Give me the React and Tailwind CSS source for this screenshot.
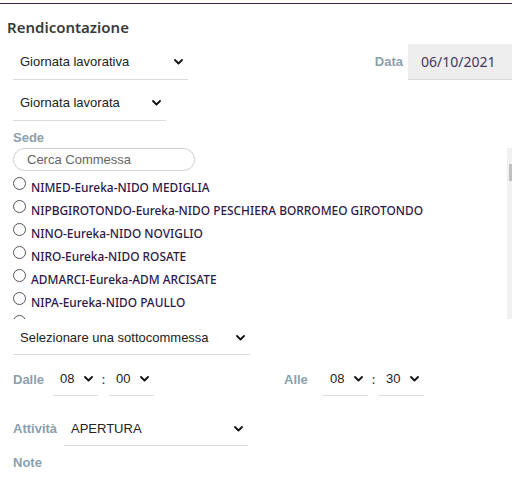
import React from 'react';

const Chevron = ({ className = '' }) => (
  <svg width="9" height="6" viewBox="0 0 9 6" className={className}>
    <path d="M1 1l3.5 3.5L8 1" fill="none" stroke="#111" strokeWidth="1.8" strokeLinecap="round" strokeLinejoin="round" />
  </svg>
);

const Select = ({ value, className = '', text = 'pl-[7px]' }) => (
  <div className={`flex items-center justify-between border-b border-[#dcdcdc] pr-[5px] text-[13px] text-[#222] font-['Liberation_Sans',Arial,sans-serif] ${text} ${className}`}>
    <span>{value}</span>
    <Chevron />
  </div>
);

const Label = ({ children, className = '' }) => (
  <span className={`text-[13px] font-bold text-[#8d9fac] font-['Liberation_Sans',Arial,sans-serif] ${className}`}>{children}</span>
);

const sedi = [
  'NIMED-Eureka-NIDO MEDIGLIA',
  'NIPBGIROTONDO-Eureka-NIDO PESCHIERA BORROMEO GIROTONDO',
  'NINO-Eureka-NIDO NOVIGLIO',
  'NIRO-Eureka-NIDO ROSATE',
  'ADMARCI-Eureka-ADM ARCISATE',
  'NIPA-Eureka-NIDO PAULLO',
];

const Radio = () => (
  <span className="block w-[13px] h-[13px] rounded-full border border-[#555] bg-white shrink-0" />
);

export default function App() {
  return (
    <div className="w-[512px] h-[498px] bg-white overflow-hidden font-['Noto_Sans',sans-serif]">
      <div className="h-[3px]" />
      <div className="h-px bg-[#3d2450]" />

      <h1 className="pl-[7px] mt-[13px] text-[15px] leading-[20px] font-semibold text-[#3a3a3a]">Rendicontazione</h1>

      {/* Tipo giornata + data */}
      <div className="mt-[7px] flex items-stretch h-[36px]">
        <Select value="Giornata lavorativa" className="ml-[13px] w-[175px]" />
        <div className="flex-1" />
        <div className="flex items-center pr-[5px]">
          <Label className="font-semibold">Data</Label>
        </div>
        <div className="w-[104px] bg-[#eeeeef] border-b border-[#d9d9dc] flex items-center pl-[13px] text-[14px] text-[#43375a]">
          06/10/2021
        </div>
      </div>

      <div className="mt-[5px] h-[36px] flex">
        <Select value="Giornata lavorata" className="ml-[13px] w-[153px]" />
      </div>

      <div className="mt-[7px] pl-[13px] leading-[16px]">
        <Label>Sede</Label>
      </div>

      {/* Lista sedi */}
      <div className="mt-[2px] flex h-[171px]">
        <div className="flex-1 overflow-hidden">
          <div className="ml-[13px] w-[182px] h-[23px] rounded-full border border-[#cfcfcf] flex items-center pl-[13px] text-[13px] text-[#666] font-['Liberation_Sans',Arial,sans-serif]">
            Cerca Commessa
          </div>
          <div className="mt-[6px]">
            {sedi.map((s) => (
              <div key={s} className="h-[23px] flex items-start pl-[13px]">
                <Radio />
                <span className="ml-[5px] mt-[3px] text-[11.9px] leading-[14px] font-medium text-[#2e1848]">{s}</span>
              </div>
            ))}
            <div className="h-[23px] flex items-start pl-[13px]">
              <Radio />
            </div>
          </div>
        </div>
        <div className="w-[5px] bg-[#f1f1f1]">
          <div className="mt-[16px] ml-[2px] w-[3px] h-[17px] bg-[#c1c1c1]" />
        </div>
      </div>

      <div className="mt-[2px] h-[34px] flex">
        <Select value="Selezionare una sottocommessa" className="ml-[13px] w-[237px]" />
      </div>

      {/* Orari */}
      <div className="mt-[8px] h-[33px] flex items-stretch">
        <div className="w-[53px] pl-[13px] flex items-center"><Label>Dalle</Label></div>
        <Select value="08" className="w-[45px]" />
        <span className="w-[11px] text-center self-center text-[13px] text-[#333]">:</span>
        <Select value="00" className="w-[45px]" />
        <div className="w-[130px]" />
        <div className="w-[39px] flex items-center"><Label>Alle</Label></div>
        <Select value="08" className="w-[45px]" />
        <span className="w-[11px] text-center self-center text-[13px] text-[#333]">:</span>
        <Select value="30" className="w-[45px]" />
      </div>

      <div className="mt-[16px] h-[34px] flex items-stretch">
        <div className="w-[64px] pl-[13px] flex items-center"><Label>Attività</Label></div>
        <Select value="APERTURA" className="w-[184px]" />
      </div>

      <div className="mt-[7px] pl-[13px] leading-[16px]">
        <Label>Note</Label>
      </div>
    </div>
  );
}
